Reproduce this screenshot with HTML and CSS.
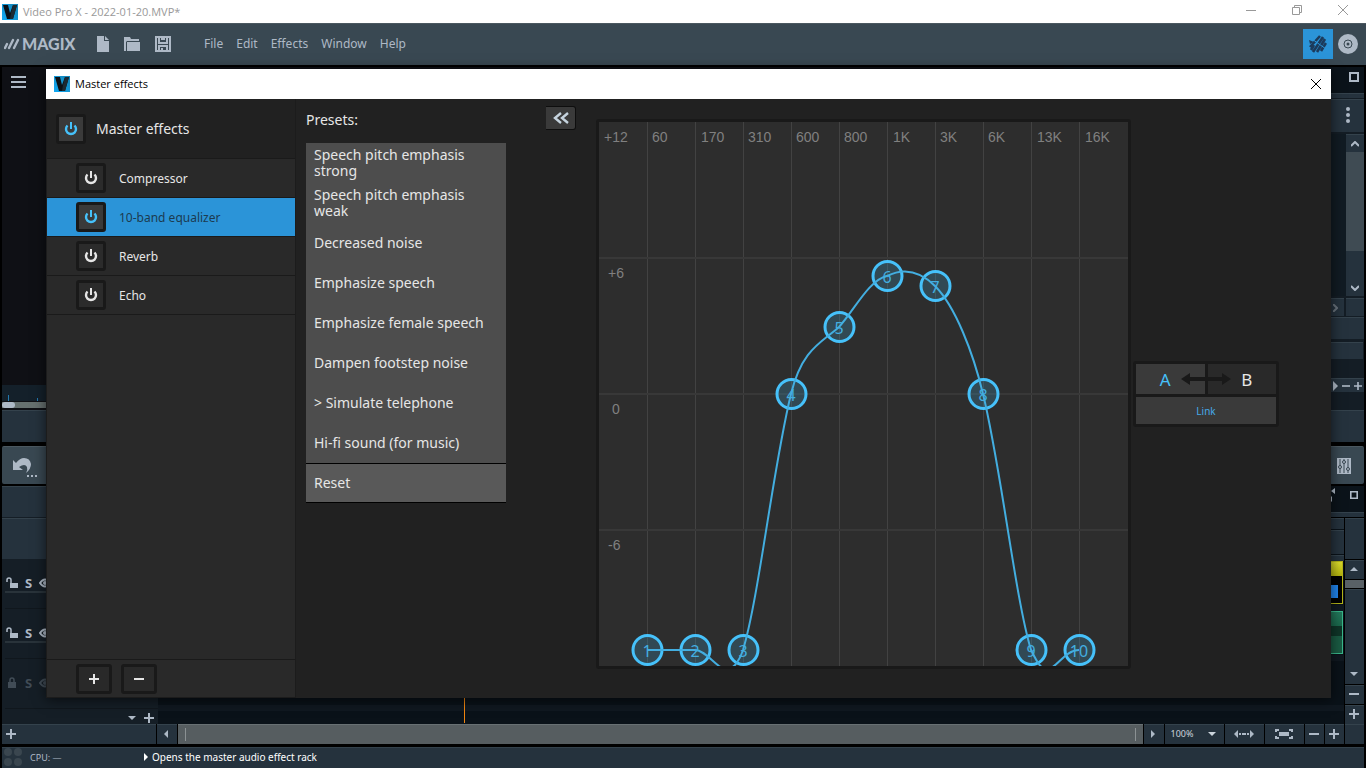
FILE: index.html
```html
<!DOCTYPE html>
<html lang="en">
<head>
    <meta charset="UTF-8">
    <meta name="viewport" content="width=device-width, initial-scale=1.0">
    <title>Video Pro X - 2022-01-20.MVP*</title>
    <link rel="stylesheet" href="styles.css">
</head>
<body>
    <!-- Shared icon shapes -->
    <svg class="defs" aria-hidden="true">
        <defs>
            <linearGradient id="logoBlue" x1="0" y1="1" x2="1" y2="0">
                <stop offset="0" stop-color="#12aaf5"/>
                <stop offset="1" stop-color="#1583b4"/>
            </linearGradient>
            <symbol id="app-logo" viewBox="0 0 16 16">
                <rect width="16" height="16" fill="url(#logoBlue)"/>
                <path d="M1 1h5l2 8 3-8h4l-4 14H5z" fill="#0b1016"/>
                <path d="M11 1h4l-4 14H8l1-6z" fill="#1c2a33"/>
            </symbol>
            <symbol id="power" viewBox="0 0 16 16">
                <path d="M4.500 4.500a5 5 0 1 0 7 0" fill="none" stroke="currentColor" stroke-width="2.400"/>
                <path d="M8 1v7" stroke="currentColor" stroke-width="2"/>
            </symbol>
            <symbol id="plus" viewBox="0 0 10 10"><path d="M0 5h10M5 0v10" stroke="currentColor" stroke-width="2"/></symbol>
            <symbol id="minus" viewBox="0 0 10 10"><path d="M0 5h10" stroke="currentColor" stroke-width="2"/></symbol>
            <symbol id="up" viewBox="0 0 8 4"><path d="M0 4l4-4 4 4z" fill="currentColor"/></symbol>
            <symbol id="down" viewBox="0 0 8 4"><path d="M0 0l4 4 4-4z" fill="currentColor"/></symbol>
            <symbol id="left" viewBox="0 0 4 8"><path d="M4 0L0 4l4 4z" fill="currentColor"/></symbol>
            <symbol id="right" viewBox="0 0 4 8"><path d="M0 0l4 4-4 4z" fill="currentColor"/></symbol>
            <symbol id="maximize" viewBox="0 0 10 10"><path d="M1 1h8v8H1z" fill="none" stroke="currentColor" stroke-width="2"/></symbol>
            <symbol id="close" viewBox="0 0 10 10"><path d="M0 0l10 10M10 0L0 10" stroke="currentColor"/></symbol>
            <symbol id="unlock" viewBox="0 0 12 12"><path d="M4 6h8v5H4z" fill="currentColor"/><path d="M1 5V3q0-2 2-2t2 2v3" fill="none" stroke="currentColor" stroke-width="1.500"/></symbol>
            <symbol id="lock" viewBox="0 0 12 12"><path d="M2 5h8v6H2z" fill="currentColor"/><path d="M4 5V3q0-2 2-2t2 2v2" fill="none" stroke="currentColor" stroke-width="1.500"/></symbol>
            <symbol id="eye" viewBox="0 0 12 10"><path d="M1 5q5-7 10 0q-5 7-10 0z" fill="none" stroke="currentColor" stroke-width="2"/><circle cx="6" cy="5" r="2" fill="currentColor"/></symbol>
        </defs>
    </svg>

    <div class="app">
        <header class="titlebar">
            <svg width="16" height="16"><use href="#app-logo"/></svg>
            <span class="titlebar-text">Video Pro X - 2022-01-20.MVP*</span>
            <div class="window-buttons">
                <button aria-label="Minimize"><svg width="10" height="10"><path d="M0 5.500h10" stroke="currentColor"/></svg></button>
                <button aria-label="Restore"><svg width="10" height="10" viewBox="0 0 10 10"><path d="M.5 2.500h7v7h-7zM2.500 2.500v-2h7v7h-2" fill="none" stroke="currentColor"/></svg></button>
                <button aria-label="Close"><svg width="10" height="10"><use href="#close"/></svg></button>
            </div>
        </header>

        <nav class="menubar">
            <svg width="16" height="12" viewBox="0 0 16 12"><path d="M1 10l2-4M5 10l4-8M10 10l4-8" stroke="currentColor" stroke-width="2.400" stroke-linecap="round"/></svg>
            <span class="brand">MAGIX</span>
            <div class="file-buttons">
                <button aria-label="New"><svg width="12" height="16" viewBox="0 0 12 16"><path d="M0 0h7v5h5v11H0z" fill="currentColor"/><path d="M8 0l4 4H8z" fill="currentColor"/></svg></button>
                <button aria-label="Open"><svg width="16" height="14" viewBox="0 0 16 14"><path d="M0 14V0h6l1 2h8v2H3L2 5v9z" fill="currentColor"/><path d="M3 5h13v9H3z" fill="currentColor"/></svg></button>
                <button aria-label="Save"><svg width="16" height="16" viewBox="0 0 16 16"><path d="M1 1h14v14H1zM4 1v6h8V1M4 15v-5h8v5" fill="none" stroke="currentColor" stroke-width="2"/><path d="M6 3h4M7 12v3" stroke="currentColor" stroke-width="2"/></svg></button>
            </div>
            <div class="menus">
                <a href="#file">File</a>
                <a href="#edit">Edit</a>
                <a href="#effects">Effects</a>
                <a href="#window">Window</a>
                <a href="#help">Help</a>
            </div>
            <div class="mode-buttons">
                <button class="mode active" aria-label="Edit mode"><svg width="18" height="18" viewBox="0 0 18 18"><path d="M2 15l3-5M4 17l10-15M8 17l8-13M1 12l10-11M12 16l5-8" stroke="currentColor" stroke-width="2.600"/><path d="M3 4l14 10" stroke="#2b94d8"/><path d="M0 5l5 2-4 2z" fill="currentColor"/></svg></button>
                <button class="mode" aria-label="Burn disc"><svg width="20" height="20" viewBox="0 0 20 20"><circle cx="10" cy="10" r="10" fill="currentColor"/><circle cx="10" cy="10" r="4" fill="none" stroke="#394852"/><circle cx="10" cy="10" r="1.500" fill="#394852"/></svg></button>
            </div>
        </nav>

        <section class="monitors">
            <div class="preview">
                <div class="preview-screen">
                    <button class="hamburger" aria-label="Menu"><svg width="15" height="12" viewBox="0 0 15 12"><path d="M0 1h15M0 6h15M0 11h15" stroke="currentColor" stroke-width="2"/></svg></button>
                </div>
                <div class="ruler"><i></i><i></i></div>
                <div class="preview-scroll"><i></i></div>
                <div class="panel preview-controls"></div>
            </div>
            <div class="pool">
                <div class="pool-head"><button aria-label="Maximize"><svg width="10" height="10"><use href="#maximize"/></svg></button></div>
                <div class="panel pool-strip"></div>
                <div class="panel pool-menu"><button aria-label="Options"><svg width="4" height="16" viewBox="0 0 4 16"><g fill="currentColor"><circle cx="2" cy="2" r="2"/><circle cx="2" cy="8" r="2"/><circle cx="2" cy="14" r="2"/></g></svg></button></div>
                <div class="pool-list">
                    <div class="panel pool-scroll">
                        <button aria-label="Scroll up"><svg width="8" height="6" viewBox="0 0 8 6"><path d="M0 5l4-4 4 4" fill="none" stroke="currentColor" stroke-width="2"/></svg></button>
                        <div class="pool-thumb"></div>
                        <button aria-label="Scroll down"><svg width="8" height="6" viewBox="0 0 8 6"><path d="M0 1l4 4 4-4" fill="none" stroke="currentColor" stroke-width="2"/></svg></button>
                    </div>
                </div>
                <div class="pool-hscroll">
                    <div class="panel"><svg width="5" height="8" viewBox="0 0 5 8"><path d="M0 0l4 4-4 4" fill="none" stroke="#67717a" stroke-width="2"/></svg></div>
                    <div class="panel"></div>
                </div>
                <div class="panel pool-bar"></div>
                <div class="panel pool-tab"></div>
                <div class="panel pool-zoom">
                    <svg width="5" height="10" viewBox="0 0 4 8"><use href="#right"/></svg>
                    <svg width="8" height="8"><use href="#minus"/></svg>
                    <svg width="8" height="8"><use href="#plus"/></svg>
                </div>
                <div class="panel preview-controls"></div>
            </div>
        </section>

        <section class="toolbar">
            <button aria-label="Undo"><svg width="26" height="22" viewBox="0 0 26 22"><path d="M1 5v10h10l-4-3q6-4 8 0q1 3-1 6q5-4 5-9q-1-6-7-6q-4 0-8 5z" fill="currentColor"/><path d="M15 21h2M19 21h2M23 21h2" stroke="currentColor" stroke-width="2"/></svg></button>
            <button aria-label="Mixer"><svg width="14" height="16" viewBox="0 0 14 16"><path d="M0 0h14v16H0z" fill="currentColor"/><path d="M3 1v14M7 1v14M11 1v14" stroke="#394852"/><g fill="#aeb9c6" stroke="#394852"><circle cx="3" cy="9" r="1.500"/><circle cx="7" cy="4" r="1.500"/><circle cx="11" cy="11" r="1.500"/></g></svg></button>
        </section>

        <section class="timeline">
            <div class="track-heads">
                <div class="panel track-title"></div>
                <div class="panel track-ruler"></div>
                <div class="track-head"><svg width="12" height="12"><use href="#unlock"/></svg><b>S</b><svg width="12" height="10"><use href="#eye"/></svg></div>
                <div class="track-head"><svg width="12" height="12"><use href="#unlock"/></svg><b>S</b><svg width="12" height="10"><use href="#eye"/></svg></div>
                <div class="track-head off"><svg width="12" height="12"><use href="#lock"/></svg><b>S</b><svg width="12" height="10"><use href="#eye"/></svg></div>
                <div class="track-add">
                    <button aria-label="Track options"><svg width="8" height="4"><use href="#down"/></svg></button>
                    <button aria-label="Add track"><svg width="10" height="10"><use href="#plus"/></svg></button>
                </div>
            </div>
            <div class="arranger">
                <div class="arranger-head">
                    <svg width="8" height="14" viewBox="0 0 8 14"><path d="M3 3l4-3v6zM0 3h2M1 11l3-3v6z" fill="currentColor"/></svg>
                    <button aria-label="Maximize"><svg width="8" height="8" viewBox="0 0 10 10"><use href="#maximize"/></svg></button>
                </div>
                <div class="panel arranger-strip"></div>
                <div class="arranger-body">
                    <div class="tracks">
                        <div class="panel marks"></div>
                        <div class="panel times"></div>
                        <div class="panel gap"></div>
                        <div class="lane"><div class="clip video"><i></i></div></div>
                        <div class="lane"><div class="clip audio"></div></div>
                        <div class="lane"></div>
                        <div class="playhead"></div>
                    </div>
                    <div class="vscroll">
                        <div class="panel vscroll-top"></div>
                        <button class="panel" aria-label="Up"><svg width="8" height="4"><use href="#up"/></svg></button>
                        <div class="vscroll-thumb"></div>
                        <button class="panel grow" aria-label="Down"><svg width="8" height="4"><use href="#down"/></svg></button>
                        <button class="panel" aria-label="Smaller tracks"><svg width="10" height="10"><use href="#minus"/></svg></button>
                        <button class="panel" aria-label="Larger tracks"><svg width="10" height="10"><use href="#plus"/></svg></button>
                    </div>
                </div>
            </div>
        </section>

        <section class="bottom-row">
            <button class="panel add" aria-label="Add"><svg width="10" height="10"><use href="#plus"/></svg></button>
            <button class="panel arrow" aria-label="Scroll left"><svg width="4" height="8"><use href="#left"/></svg></button>
            <div class="hscroll"><i></i><i></i></div>
            <button class="panel arrow" aria-label="Scroll right"><svg width="4" height="8"><use href="#right"/></svg></button>
            <button class="panel zoom-level">100% <svg width="8" height="4"><use href="#down"/></svg></button>
            <button class="panel fit" aria-label="Fit width"><svg width="20" height="8" viewBox="0 0 20 8"><path d="M4 0v8L0 4zM16 0v8l4-4z" fill="currentColor"/><path d="M5 4h2M8 4h4M13 4h2" stroke="currentColor" stroke-width="2"/></svg></button>
            <button class="panel fit" aria-label="Fit all"><svg width="18" height="10" viewBox="0 0 18 10"><path d="M4 3h10v4H4z" fill="currentColor"/><path d="M1 3V1h3M14 1h3v2M17 7v2h-3M4 9H1V7" fill="none" stroke="currentColor" stroke-width="2"/></svg></button>
            <button class="panel small" aria-label="Zoom out"><svg width="10" height="10"><use href="#minus"/></svg></button>
            <button class="panel small" aria-label="Zoom in"><svg width="10" height="10"><use href="#plus"/></svg></button>
            <div class="panel small"></div>
        </section>

        <footer class="panel statusbar">
            <svg width="18" height="18" viewBox="0 0 18 18"><g fill="#3a464f"><circle cx="4" cy="4" r="4"/><circle cx="14" cy="4" r="4"/><circle cx="4" cy="14" r="4"/><circle cx="14" cy="14" r="4"/></g></svg>
            <span class="cpu">CPU: —</span>
            <span class="hint"><svg width="4" height="8"><use href="#right"/></svg> Opens the master audio effect rack</span>
        </footer>

        <!-- Master effects window, floats over the workspace -->
        <div class="dialog" role="dialog" aria-labelledby="dialogTitle">
            <div class="dialog-title">
                <svg width="16" height="16"><use href="#app-logo"/></svg>
                <span id="dialogTitle">Master effects</span>
                <button aria-label="Close"><svg width="10" height="10"><use href="#close"/></svg></button>
            </div>
            <div class="dialog-body">
                <aside class="rack">
                    <div class="rack-head">
                        <button class="power on" aria-label="Master effects on/off"><svg width="16" height="16"><use href="#power"/></svg></button>
                        <h1>Master effects</h1>
                    </div>
                    <ul class="rack-list">
                        <li><button class="power" aria-label="Compressor on/off"><svg width="16" height="16"><use href="#power"/></svg></button><span>Compressor</span></li>
                        <li class="selected"><button class="power on" aria-label="Equalizer on/off"><svg width="16" height="16"><use href="#power"/></svg></button><span>10-band equalizer</span></li>
                        <li><button class="power" aria-label="Reverb on/off"><svg width="16" height="16"><use href="#power"/></svg></button><span>Reverb</span></li>
                        <li><button class="power" aria-label="Echo on/off"><svg width="16" height="16"><use href="#power"/></svg></button><span>Echo</span></li>
                    </ul>
                    <div class="rack-foot">
                        <button aria-label="Add effect"><svg width="10" height="10"><use href="#plus"/></svg></button>
                        <button aria-label="Remove effect"><svg width="10" height="10"><use href="#minus"/></svg></button>
                    </div>
                </aside>

                <section class="presets">
                    <h2>Presets:</h2>
                    <div class="preset-list">
                        <button>Speech pitch emphasis strong</button>
                        <button>Speech pitch emphasis weak</button>
                        <button>Decreased noise</button>
                        <button>Emphasize speech</button>
                        <button>Emphasize female speech</button>
                        <button>Dampen footstep noise</button>
                        <button>&gt; Simulate telephone</button>
                        <button>Hi-fi sound (for music)</button>
                        <button class="reset">Reset</button>
                    </div>
                </section>
                <button class="collapse" aria-label="Hide presets"><svg width="16" height="12" viewBox="0 0 16 12"><path d="M8 1L2 6l6 5M15 1L9 6l6 5" fill="none" stroke="currentColor" stroke-width="2.400"/></svg></button>

                <div class="equalizer">
                    <svg class="graph" viewBox="0 0 529 544">
                        <path class="grid" d="M48.500 0v544M96.500 0v544M144.500 0v544M192.500 0v544M240.500 0v544M288.500 0v544M336.500 0v544M384.500 0v544M432.500 0v544M480.500 0v544"/>
                        <path class="grid level" d="M0 136h529M0 272h529M0 408h529"/>
                        <g class="axis">
                            <text x="5" y="20">+12</text>
                            <text x="53" y="20">60</text>
                            <text x="102" y="20">170</text>
                            <text x="149" y="20">310</text>
                            <text x="197" y="20">600</text>
                            <text x="245" y="20">800</text>
                            <text x="294" y="20">1K</text>
                            <text x="341" y="20">3K</text>
                            <text x="389" y="20">6K</text>
                            <text x="438" y="20">13K</text>
                            <text x="486" y="20">16K</text>
                            <text x="9" y="156">+6</text>
                            <text x="13" y="292">0</text>
                            <text x="9" y="428">-6</text>
                        </g>
                        <g class="bands">
                            <circle cx="48.500" cy="528" r="14.500"/>
                            <circle cx="96.500" cy="528" r="14.500"/>
                            <circle cx="144.500" cy="528" r="14.500"/>
                            <circle cx="192.500" cy="272" r="14.500"/>
                            <circle cx="240.500" cy="205" r="14.500"/>
                            <circle cx="288.500" cy="154" r="14.500"/>
                            <circle cx="336.500" cy="164" r="14.500"/>
                            <circle cx="384.500" cy="272" r="14.500"/>
                            <circle cx="432.500" cy="528" r="14.500"/>
                            <circle cx="480.500" cy="528" r="14.500"/>
                        </g>
                        <g class="numbers">
                            <text x="48" y="535">1</text>
                            <text x="96" y="535">2</text>
                            <text x="144" y="535">3</text>
                            <text x="192" y="279">4</text>
                            <text x="240" y="212">5</text>
                            <text x="288" y="161">6</text>
                            <text x="336" y="171">7</text>
                            <text x="384" y="279">8</text>
                            <text x="432" y="535">9</text>
                            <text x="480" y="535">10</text>
                        </g>
                        <path class="curve" d="M48 528H96C104 528 112 538 120 544C126 548 131 548 136 543Q141 537 144 528C160 475 174 345 192 272C203 227 222 221 240 205C256 187 270 158 288 154C304 146 320 148 336 164C356 184 374 230 384 272C402 345 416 475 432 528C438 540 442 548 449 547C458 546 466 528 480 528"/>
                    </svg>
                </div>

                <div class="compare">
                    <div class="ab">
                        <button class="a">A</button>
                        <button class="b">B</button>
                        <svg class="ab-arrow" width="50" height="14" viewBox="0 0 50 14"><path d="M0 7l9-6v4h32V1l9 6-9 6V9H9v4z" fill="#191919"/></svg>
                    </div>
                    <button class="link">Link</button>
                </div>
            </div>
        </div>
    </div>
</body>
</html>
```

FILE: styles.css
```css
* {
    box-sizing: border-box;
}
body {
    margin: 0;
    background-color: #000;
    color: #aeb9c6;
    font-family: "Noto Sans", sans-serif;
    font-size: 12px;
}
button {
    display: flex;
    align-items: center;
    justify-content: center;
    padding: 0;
    border: none;
    background: none;
    color: inherit;
    font-family: inherit;
    font-size: inherit;
    cursor: pointer;
}
svg {
    display: block;
    flex: none;
}
.defs {
    position: absolute;
    width: 0;
    height: 0;
}
.app {
    position: relative;
    display: flex;
    flex-direction: column;
    height: 100vh;
    overflow: hidden;
}
.panel {
    background-color: #25323d;
    border-top: 1px solid #34424c;
}

/* Title bar and menu */
.titlebar {
    display: flex;
    align-items: center;
    gap: 5px;
    height: 23px;
    padding-left: 2px;
    background-color: #fff;
    color: #999;
    font-family: "Open Sans", sans-serif;
    font-size: 11px;
}
.window-buttons {
    display: flex;
    height: 100%;
    margin-left: auto;
    padding-bottom: 3px;
}
.window-buttons button {
    width: 46px;
}
.menubar {
    display: flex;
    align-items: center;
    height: 42px;
    padding: 0 8px 2px 4px;
    background-color: #394852;
    border-top: 1px solid #4b5860;
}
.brand {
    width: 72px;
    padding-left: 2px;
    font-family: Lato, sans-serif;
    font-size: 16px;
    font-weight: 900;
}
.file-buttons {
    display: flex;
    align-items: center;
    gap: 15px;
    padding-left: 5px;
}
.menus {
    display: flex;
    gap: 13px;
    padding-left: 33px;
}
.menus a {
    color: inherit;
    text-decoration: none;
}
.mode-buttons {
    display: flex;
    gap: 5px;
    margin-left: auto;
}
.mode.active {
    width: 30px;
    height: 30px;
    background-color: #2b94d8;
    color: #1c3b5c;
}

/* Preview and media pool */
.monitors {
    display: flex;
    justify-content: space-between;
    flex: 1;
    min-height: 0;
    margin: 2px 2px 4px;
    background-color: #0f1015;
}
.preview {
    display: flex;
    flex-direction: column;
    width: 50%;
}
.preview-screen {
    flex: 1;
    padding: 9px;
}
.ruler {
    display: flex;
    align-items: flex-end;
    gap: 28px;
    height: 16px;
    padding-left: 6px;
    background-color: #14202a;
}
.ruler i {
    width: 1px;
    height: 3px;
    background-color: #2378ad;
}
.ruler i:first-child {
    height: 6px;
}
.preview-scroll {
    height: 6px;
    margin: 1px 0 2px;
    background-color: #66706f;
}
.preview-scroll i {
    display: block;
    width: 13px;
    height: 6px;
    border-radius: 3px;
    background-color: #aeb9c6;
}
.preview-controls {
    height: 32px;
}
.pool {
    display: flex;
    flex-direction: column;
    width: 300px;
    background-color: #141d25;
}
.pool-head {
    display: flex;
    align-items: center;
    justify-content: flex-end;
    height: 26px;
    padding: 0 5px 6px;
    background-color: #0b131a;
}
.pool-strip {
    height: 5px;
    margin-bottom: 1px;
}
.pool-menu {
    display: flex;
    justify-content: flex-end;
    height: 33px;
    margin-bottom: 2px;
    padding: 0 14px 2px 0;
}
.pool-list {
    display: flex;
    justify-content: flex-end;
    flex: 1;
    background-color: #111b23;
}
.pool-scroll {
    display: flex;
    flex-direction: column;
    width: 18px;
}
.pool-scroll button {
    height: 17px;
}
.pool-thumb {
    height: 99px;
    margin-bottom: auto;
    background-color: #3f4b53;
}
.pool-hscroll {
    display: flex;
    gap: 2px;
    height: 18px;
    margin: 2px 0 1px;
}
.pool-hscroll .panel:first-child {
    display: flex;
    align-items: center;
    justify-content: flex-end;
    flex: 1;
    padding-right: 6px;
}
.pool-hscroll .panel:last-child {
    width: 18px;
}
.pool-bar {
    height: 22px;
    margin-bottom: 3px;
}
.pool-tab {
    height: 17px;
    margin: 0 1px 19px 0;
}
.pool-zoom {
    display: flex;
    align-items: center;
    justify-content: flex-end;
    gap: 4px;
    height: 14px;
    margin-bottom: 18px;
    padding-right: 2px;
}

/* Toolbar */
.toolbar {
    display: flex;
    justify-content: space-between;
    height: 38px;
    margin: 0 2px 2px;
    padding: 0 13px 0 10px;
    background-color: #394852;
    border-top: 1px solid #4b5860;
    border-radius: 2px;
}

/* Timeline */
.timeline {
    display: flex;
    height: 238px;
    margin: 0 2px;
}
.track-heads {
    display: flex;
    flex-direction: column;
    width: 156px;
    background-color: #151e26;
}
.track-title {
    height: 31px;
    margin-bottom: 1px;
}
.track-ruler {
    height: 41px;
}
.track-head {
    display: flex;
    align-items: center;
    gap: 7px;
    height: 50px;
    margin-left: 3px;
    padding: 0 0 2px 1px;
    border-bottom: 1px solid #10171d;
    background-image: linear-gradient(#29333a, #29333a);
    background-position: 0 32px;
    background-repeat: no-repeat;
    background-size: 100% 2px;
    font-size: 13px;
}
.track-head.off {
    background-image: none;
    color: #414c56;
}
.track-add {
    display: flex;
    align-items: center;
    justify-content: flex-end;
    gap: 8px;
    flex: 1;
    padding: 3px 4px 0 0;
}
.arranger {
    display: flex;
    flex-direction: column;
    flex: 1;
}
.arranger-head {
    display: flex;
    align-items: center;
    justify-content: flex-end;
    gap: 14px;
    height: 26px;
    padding: 0 6px 8px 0;
    background-color: #0b131a;
}
.arranger-strip {
    height: 5px;
    margin-bottom: 1px;
}
.arranger-body {
    display: flex;
    flex: 1;
}
.tracks {
    position: relative;
    flex: 1;
    background-color: #0a1219;
}
.marks {
    height: 11px;
    margin-bottom: 1px;
}
.times {
    height: 24px;
    margin-bottom: 1px;
}
.gap {
    height: 6px;
}
.lane {
    height: 50px;
    padding-right: 1px;
    border-bottom: 6px solid #101820;
}
.clip {
    height: 43px;
    margin-left: 70%;
}
.clip.video {
    display: flex;
    align-items: flex-end;
    justify-content: flex-end;
    padding: 0 4px 5px 0;
    background: linear-gradient(#dcdc2c, #b2b20e 14px, #000 14px);
    border: 1px solid #b5b519;
}
.clip.video i {
    width: 40px;
    height: 13px;
    background-color: #2084ec;
}
.clip.audio {
    background: linear-gradient(#23785b, #1a684c 14px, #0f3528 14px, #0f3528 24px, #1a5b43 24px);
    border: 1px solid #39b78b;
}
.playhead {
    position: absolute;
    top: 42px;
    bottom: 1px;
    left: 306px;
    width: 1px;
    background-color: #f08510;
}
.vscroll {
    display: flex;
    flex-direction: column;
    gap: 1px;
    width: 20px;
    padding-left: 1px;
}
.vscroll-top {
    height: 41px;
}
.vscroll button {
    height: 19px;
    padding: 0 2px 2px 0;
}
.vscroll .grow {
    flex: 1;
    align-items: flex-end;
    padding-bottom: 8px;
}
.vscroll-thumb {
    height: 8px;
    background-color: #596166;
}

/* Timeline scroll bar */
.bottom-row {
    display: flex;
    gap: 1px;
    height: 20px;
    margin: 0 2px 3px;
}
.bottom-row button {
    padding: 0 2px 2px 0;
}
.bottom-row .add {
    justify-content: flex-start;
    width: 154px;
    padding-left: 4px;
}
.arrow {
    width: 20px;
}
.hscroll {
    display: flex;
    align-items: center;
    justify-content: space-between;
    flex: 1;
    padding: 0 7px;
    background-color: #565d60;
    border-top: 1px solid #687073;
}
.hscroll i {
    width: 1px;
    height: 13px;
    background-color: #8b9193;
}
.zoom-level {
    gap: 15px;
    width: 59px;
    color: #ccd4dc;
    font-size: 9px;
}
.fit {
    width: 39px;
}
.small {
    width: 19px;
}
.statusbar {
    display: flex;
    align-items: center;
    height: 21px;
    margin: 0 2px;
    padding: 0 0 2px 2px;
    font-size: 10px;
}
.cpu {
    width: 122px;
    padding-left: 8px;
    font-size: 9px;
}
.hint {
    display: flex;
    align-items: center;
    gap: 4px;
    color: #fff;
}

/* Master effects window */
.dialog {
    position: absolute;
    top: 69px;
    right: 35px;
    bottom: 70px;
    left: 46px;
    display: flex;
    flex-direction: column;
    background-color: #212121;
    box-shadow: 0 2px 12px rgba(0,0,0,0.6);
}
.dialog-title {
    display: flex;
    align-items: center;
    gap: 5px;
    height: 30px;
    padding: 0 0 1px 8px;
    background-color: #fff;
    color: #000;
    font-family: "Open Sans", sans-serif;
    font-size: 11px;
}
.dialog-title button {
    width: 30px;
    height: 29px;
    margin-left: auto;
}
.dialog-body {
    display: flex;
    align-items: flex-start;
    flex: 1;
    color: #e6e6e6;
}
.rack {
    display: flex;
    flex-direction: column;
    align-self: stretch;
    width: 250px;
    background-color: #292929;
    border: 1px solid #1c1c1c;
    border-top: none;
}
.rack-head {
    display: flex;
    align-items: center;
    gap: 10px;
    height: 60px;
    padding-left: 9px;
    background-color: #212121;
    border-bottom: 1px solid #1a1a1a;
}
h1, h2 {
    margin: 0;
    font-size: 14px;
    font-weight: normal;
}
.power {
    width: 30px;
    height: 30px;
    border: 3px solid #191919;
    border-radius: 3px;
    background-color: #2b2b2b;
}
.power.on {
    background-color: #3a3a3a;
    color: #46c1fa;
}
.rack-list {
    flex: 1;
    margin: 0;
    padding: 0;
    list-style: none;
}
.rack-list li {
    display: flex;
    align-items: center;
    gap: 13px;
    height: 39px;
    padding-left: 29px;
    border-bottom: 1px solid #1a1a1a;
}
.rack-list .selected {
    background-color: #2b94d8;
    color: #1c3b50;
}
.rack-foot {
    display: flex;
    align-items: center;
    gap: 9px;
    height: 38px;
    padding-left: 29px;
    border-top: 1px solid #1a1a1a;
}
.rack-foot button {
    width: 36px;
    height: 30px;
    border: 3px solid #191919;
    border-radius: 3px;
}
.presets {
    width: 200px;
    margin: 11px 40px 0 10px;
}
.presets h2 {
    height: 33px;
    line-height: 20px;
}
.preset-list button {
    justify-content: flex-start;
    width: 100%;
    height: 40px;
    padding: 0 40px 0 8px;
    background-color: #4d4d4d;
    font-size: 14px;
    line-height: 16px;
    text-align: left;
}
.preset-list button:nth-child(n+3) {
    padding-right: 8px;
}
.preset-list .reset {
    background-color: #595959;
    border: solid #000;
    border-width: 1px 0;
}
.collapse {
    width: 30px;
    height: 24px;
    margin-top: 7px;
    border: solid #0e0e0e;
    border-width: 1px 1px 1px 0;
    border-radius: 0 3px 3px 0;
    background-color: #3a3a3a;
    color: #c5d3de;
}
.equalizer {
    margin: 20px 2px 0 20px;
    border: 3px solid #191919;
    border-radius: 3px;
    background-color: #2d2d2d;
}
.graph {
    width: 529px;
    height: 544px;
}
.grid {
    fill: none;
    stroke: #424242;
    stroke-width: 1;
}
.grid.level {
    stroke: #383838;
    stroke-width: 2;
}
.axis {
    fill: #808080;
    font-family: "Liberation Sans", sans-serif;
    font-size: 14px;
}
.bands {
    fill: rgba(58,140,175,0.3);
    stroke: #46c1fa;
    stroke-width: 3;
}
.numbers {
    fill: #43aee0;
    font-size: 16px;
    text-anchor: middle;
}
.curve {
    fill: none;
    stroke: #43aee0;
    stroke-width: 2;
}
.compare {
    width: 146px;
    margin-top: 262px;
    border: 3px solid #191919;
    border-radius: 3px;
    background-color: #191919;
}
.ab {
    position: relative;
    display: flex;
    gap: 3px;
    margin-bottom: 3px;
}
.ab button {
    flex: 1;
    height: 30px;
    font-size: 17px;
}
.ab .a {
    padding-right: 10px;
    background-color: #3a3a3a;
    color: #46c1fa;
}
.ab .b {
    padding-left: 10px;
    background-color: #292929;
}
.ab-arrow {
    position: absolute;
    top: 8px;
    left: 45px;
}
.link {
    width: 100%;
    height: 27px;
    background-color: #3a3a3a;
    color: #46a9e8;
    font-size: 10px;
}
```
